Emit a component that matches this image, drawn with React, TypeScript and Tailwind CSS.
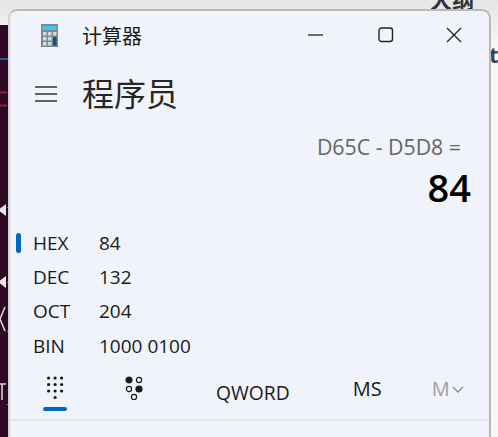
const font = { fontFamily: '"Open Sans", "Noto Sans CJK SC", sans-serif' };

function BackdropStrip() {
  return (
    <svg className="absolute left-0 top-[25px]" width="10" height="412" viewBox="0 0 10 412">
      <rect width="10" height="412" fill="#2c0a24" />
      <rect x="8" width="2" height="412" fill="#4c3a48" />
      <rect y="33" width="9" height="2" fill="#2a5a96" />
      <path d="M0 67.5h7M0 80.5h7" stroke="#8f1c38" strokeWidth="2" />
      <path d="M6 179v12l-8-6z" fill="#e8e4e2" />
      <path d="M6 251v12l-8-6z" fill="#e8e4e2" />
      <path d="M5 282L0 294l5 12" stroke="#d8d2d0" strokeWidth="1.6" fill="none" />
      <path d="M0 359h6M2 359v16" stroke="#d8d2d0" strokeWidth="1.6" fill="none" />
      <path d="M7 182.500h2M7 257.500h2M7 306.500h2M7 379.500h2" stroke="#8c7f88" />
    </svg>
  );
}

function AppIcon() {
  return (
    <svg width="17" height="23" viewBox="0 0 17 23">
      <rect width="17" height="23" fill="#7a8a96" />
      <rect x="1.5" y="2" width="14" height="4" fill="#49c3ee" />
      <rect x="2" y="8" width="3.5" height="3.5" fill="#d4dae0" />
      <rect x="7" y="8" width="3.5" height="3.5" fill="#d4dae0" />
      <rect x="12" y="8" width="3.5" height="3.5" fill="#d4dae0" />
      <rect x="2" y="13" width="3.5" height="3.5" fill="#d4dae0" />
      <rect x="7" y="13" width="3.5" height="3.5" fill="#d4dae0" />
      <rect x="2" y="18" width="3.5" height="3.5" fill="#d4dae0" />
      <rect x="7" y="18" width="3.5" height="3.5" fill="#d4dae0" />
      <rect x="12" y="13" width="3.5" height="8.5" fill="#11508f" />
    </svg>
  );
}

function KeypadIcon() {
  const dots = [];
  for (let r = 0; r < 3; r++) {
    for (let c = 0; c < 3; c++) dots.push([2.6 + c * 6.5, 2 + r * 6.5]);
  }
  dots.push([9.1, 21.5]);
  return (
    <svg width="18" height="24" viewBox="0 0 18 24">
      {dots.map(([x, y], i) => (
        <circle key={i} cx={x} cy={y} r="1.6" fill="#1a1a1a" />
      ))}
    </svg>
  );
}

function BitIcon() {
  return (
    <svg width="18" height="24" viewBox="0 0 18 24" fill="none" stroke="#1a1a1a" strokeWidth="1.2">
      <circle cx="4" cy="4" r="3" fill="#1a1a1a" />
      <circle cx="14" cy="4" r="2.6" />
      <circle cx="4" cy="13" r="2.6" />
      <circle cx="14" cy="13" r="3" fill="#1a1a1a" />
      <circle cx="9" cy="21" r="2.6" />
    </svg>
  );
}

const rows = [
  { label: "HEX", value: "84", active: true },
  { label: "DEC", value: "132" },
  { label: "OCT", value: "204" },
  { label: "BIN", value: "1000 0100" },
];

export default function App() {
  return (
    <div
      className="relative w-[498px] h-[437px] overflow-hidden bg-gradient-to-b from-[#e6e6e6] to-[#f8f8f8] to-[12%]"
      style={font}
    >
      <BackdropStrip />
      <div className="absolute left-[430px] top-[-13px] text-[22px] leading-[24px] font-bold text-[#333]">大纲</div>
      <div className="absolute left-[489px] top-[42px] text-[22px] leading-[24px] font-bold text-[#444]">t</div>

      {/* calculator window */}
      <div className="absolute left-[8px] top-[9px] w-[483px] h-[428px] flex flex-col rounded-t-[9px] border-2 border-b-0 border-[#b9b9b9] border-l-[#d4d4d8] bg-[#f0f3fa] text-[#1a1a1a]">
        <div className="h-[40px] mt-[4px] flex items-center shrink-0">
          <div className="ml-[31px] w-[41px]">
            <AppIcon />
          </div>
          <span className="mt-[3px] text-[20px] leading-none">计算器</span>
          <div className="ml-auto flex items-center">
            <svg width="16" height="16" viewBox="0 0 16 16" className="mr-[54px]">
              <path d="M0 8h15" stroke="#222" strokeWidth="1.3" />
            </svg>
            <svg width="16" height="16" viewBox="0 0 16 16" className="mr-[52px]">
              <rect x="1" y="1" width="13.5" height="13.5" rx="2.5" fill="none" stroke="#222" strokeWidth="1.4" />
            </svg>
            <svg width="16" height="16" viewBox="0 0 16 16" className="mr-[27px]">
              <path d="M1 1l14 14M15 1L1 15" stroke="#222" strokeWidth="1.3" />
            </svg>
          </div>
        </div>

        <div className="h-[50px] mt-[14px] flex items-center shrink-0">
          <svg width="22" height="16" viewBox="0 0 22 16" className="ml-[25px] mr-[25px]">
            <path d="M0 1h22M0 8h22M0 15h22" stroke="#333" strokeWidth="1.4" />
          </svg>
          <span className="text-[32px] leading-none text-[#262626]">程序员</span>
        </div>

        <div className="mt-[14px] pr-[28px] text-right text-[21.3px] leading-[28px] text-[#666]">D65C - D5D8 =</div>
        <div className="pr-[18px] text-right text-[38px] leading-[52px] font-semibold text-black">84</div>

        <div className="mt-[13px] flex flex-col">
          {rows.map((row) => (
            <div key={row.label} className="relative h-[34.3px] flex items-center text-[19px]">
              {row.active && <div className="absolute left-[6px] top-[7px] w-[5px] h-[20px] rounded-full bg-[#0067c0]" />}
              <span className="ml-[23px] w-[66px]">{row.label}</span>
              <span>{row.value}</span>
            </div>
          ))}
        </div>

        <div className="relative mt-[2px] h-[60px] flex items-start">
          <div className="ml-[33px] mt-[11px] flex flex-col items-center w-[24px]">
            <KeypadIcon />
            <div className="mt-[7px] w-[24px] h-[4px] rounded-full bg-[#0067c0]" />
          </div>
          <div className="ml-[58px] mt-[11px]">
            <BitIcon />
          </div>
          <span className="ml-[73px] mt-[15px] text-[19.3px] leading-[26px]">QWORD</span>
          <span className="ml-[63px] mt-[11px] text-[20px] leading-[26px]">MS</span>
          <span className="ml-[50px] mt-[11px] text-[20px] leading-[26px] text-[#a0a0a4]">M</span>
          <svg width="12" height="8" viewBox="0 0 12 8" className="ml-[2px] mt-[21px]">
            <path d="M1 1l5 5 5-5" fill="none" stroke="#8a8a8e" strokeWidth="1.3" />
          </svg>
          <div className="absolute left-0 right-0 top-[54px] h-[2px] bg-[#e3e4e9]" />
        </div>
      </div>
    </div>
  );
}
